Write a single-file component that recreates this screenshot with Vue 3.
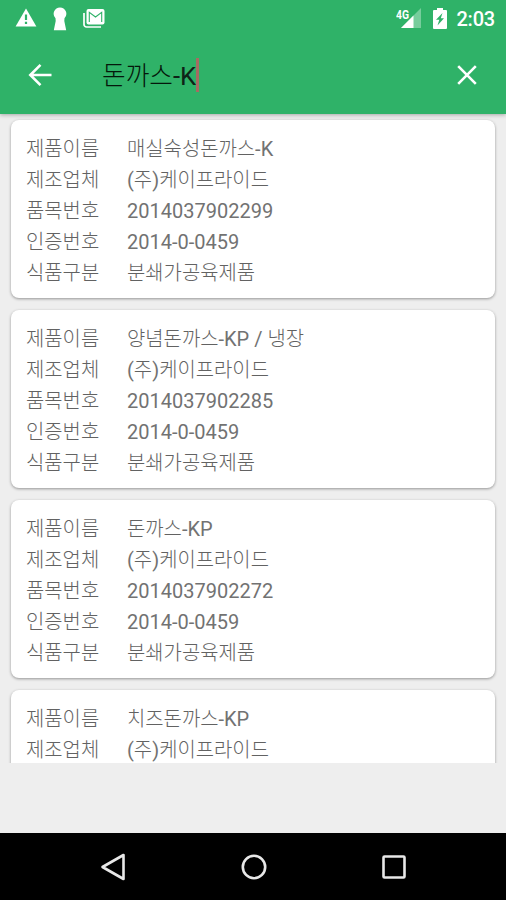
<template>
  <div class="screen">
    <header class="top">
      <div class="status-bar">
        <svg class="warn" width="22" height="20" viewBox="0 0 22 20">
          <path d="M11 0.500 21.400 18.500H.6z" fill="#fff" />
          <path d="M11 6.500v5.500M11 13.700v2.300" stroke="#2fb268" stroke-width="2.200" />
        </svg>
        <svg class="keyhole" width="14" height="24" viewBox="0 0 14 24">
          <path d="M7 .5a6.300 6.300 0 0 1 4.500 10.700L11.300 14l1.900 9.300H.8L2.700 14l-.2-2.800A6.300 6.300 0 0 1 7 .5z" fill="#fff" />
        </svg>
        <svg class="mail" width="22" height="19" viewBox="0 0 22 19">
          <path d="M1 4v11.500a2.500 2.500 0 0 0 2.500 2.500H18" fill="none" stroke="#fff" stroke-width="1.700" />
          <rect x="3.500" y="0" width="18" height="15.500" rx="2" fill="#fff" />
          <path d="M6.300 13V3.300l6.200 4.700 6.200-4.700V13" fill="none" stroke="#2fb268" stroke-width="1.100" />
        </svg>
        <div class="network">
          <span class="net-label">4G</span>
          <svg width="22" height="22" viewBox="0 0 22 22">
            <path d="M21 1v20H1z" fill="#fff" opacity=".35" />
            <path d="M13.500 8.500V21H1z" fill="#fff" />
          </svg>
        </div>
        <svg class="battery" width="14" height="21" viewBox="0 0 14 21">
          <path d="M4 0h6v2h3a1 1 0 0 1 1 1v17a1 1 0 0 1-1 1H1a1 1 0 0 1-1-1V3a1 1 0 0 1 1-1h3z" fill="#fff" />
          <path d="M9.500 5 3 11.800h3.300L4.500 17.500l6.500-7.300H7.800z" fill="#2fb268" />
        </svg>
        <span class="clock">2:03</span>
      </div>
      <div class="search-bar">
        <svg class="back" width="24" height="24" viewBox="0 0 24 24">
          <path d="M23.500 12H2.500M12.500 1.800 2.300 12l10.200 10.200" fill="none" stroke="#fff" stroke-width="2.600" />
        </svg>
        <div class="query">
          <span v-for="(part, i) in splitScript(query)" :key="i" :class="{ hangul: part.hangul }">{{ part.text }}</span>
          <i class="caret"></i>
        </div>
        <svg class="clear" width="20" height="20" viewBox="0 0 20 20">
          <path d="M1.200 1.200l17.600 17.600M18.800 1.200 1.200 18.800" stroke="#fff" stroke-width="2.600" />
        </svg>
      </div>
    </header>

    <main class="list">
      <section v-for="item in products" :key="item.name" class="card">
        <dl v-for="field in filledFields(item)" :key="field.key" class="row">
          <dt class="hangul">{{ field.label }}</dt>
          <dd>
            <span
              v-for="(part, i) in splitScript(item[field.key])"
              :key="i"
              :class="{ hangul: part.hangul }"
            >{{ part.text }}</span>
          </dd>
        </dl>
      </section>
    </main>

    <div class="spacer"></div>

    <nav class="nav-bar">
      <svg width="28" height="28" viewBox="0 0 28 28">
        <path d="M24.500 2v24L3.500 14z" />
      </svg>
      <svg width="28" height="28" viewBox="0 0 28 28">
        <circle cx="14" cy="14" r="11.200" />
      </svg>
      <svg width="28" height="28" viewBox="0 0 28 28">
        <rect x="3.500" y="3.500" width="21" height="21" rx="1" />
      </svg>
    </nav>
  </div>
</template>

<script setup>
import { ref } from 'vue'

const query = ref('돈까스-K')

const fields = [
  { key: 'name', label: '제품이름' },
  { key: 'maker', label: '제조업체' },
  { key: 'code', label: '품목번호' },
  { key: 'cert', label: '인증번호' },
  { key: 'type', label: '식품구분' }
]

const common = {
  maker: '(주)케이프라이드',
  cert: '2014-0-0459',
  type: '분쇄가공육제품'
}

const products = ref([
  { ...common, name: '매실숙성돈까스-K', code: '2014037902299' },
  { ...common, name: '양념돈까스-KP / 냉장', code: '2014037902285' },
  { ...common, name: '돈까스-KP', code: '2014037902272' },
  { name: '치즈돈까스-KP', maker: common.maker }
])

const filledFields = (item) => fields.filter((field) => item[field.key])

// Hangul is set in a lighter weight than Latin letters and digits
const splitScript = (text) =>
  text.match(/[가-힣]+|[^가-힣]+/g).map((part) => ({
    text: part,
    hangul: /[가-힣]/.test(part)
  }))
</script>

<style>
body {
  margin: 0;
}
</style>

<style scoped>
.screen {
  display: flex;
  flex-direction: column;
  width: 506px;
  height: 900px;
  overflow: hidden;
  background: #eeeeee;
  font-family: Roboto, 'Noto Sans CJK KR', sans-serif;
}

.top {
  position: relative;
  z-index: 1;
  flex: none;
  height: 114px;
  background: #2fb268;
  box-shadow: 0 1px 4px rgba(0, 0, 0, 0.3);
}

.status-bar {
  display: flex;
  align-items: center;
  height: 36px;
  padding: 0 11px 0 15px;
}

.keyhole {
  margin: 1px 0 0 16px;
}

.mail {
  margin-left: 16px;
}

.network {
  position: relative;
  height: 22px;
  margin-left: auto;
}

.net-label {
  position: absolute;
  top: 2px;
  left: -4px;
  color: #fff;
  font-size: 12px;
  font-weight: 700;
  line-height: 12px;
  transform: scaleX(0.86);
  transform-origin: left;
}

.battery {
  margin-left: 11px;
}

.clock {
  margin-left: 9px;
  padding-top: 2px;
  color: #fff;
  font-size: 20px;
  font-weight: 500;
  letter-spacing: -0.2px;
}

.search-bar {
  display: flex;
  align-items: center;
  height: 78px;
  padding: 0 29px 0 28px;
}

.query {
  display: flex;
  flex: 1;
  align-items: center;
  margin-left: 50px;
  padding-top: 2px;
  color: #0e2317;
  font-size: 25.7px;
  line-height: 34px;
}

.query .hangul {
  color: #04170b;
  font-weight: 300;
}

.caret {
  width: 3px;
  height: 34px;
  margin-top: -2px;
  background: #a56c62;
}

.list {
  flex: none;
  height: 649px;
  overflow: hidden;
}

.card {
  box-sizing: border-box;
  height: 178px;
  margin: 6px 11px 12px;
  padding: 14px 15px 0;
  border-radius: 8px;
  background: #fff;
  box-shadow: 0 1px 3px rgba(0, 0, 0, 0.38);
}

.row {
  display: flex;
  height: 31px;
  margin: 0;
  color: #727272;
  font-size: 20px;
  line-height: 31px;
  white-space: nowrap;
}

.row .hangul {
  color: #626262;
  font-size: 19.9px;
  font-weight: 300;
}

.row dt {
  width: 101px;
}

.row dd {
  margin: 0;
  white-space: pre;
}

.spacer {
  flex: 1;
}

.nav-bar {
  display: flex;
  flex: none;
  align-items: center;
  justify-content: space-between;
  height: 67px;
  padding: 0 98px 0 99px;
  background: #000;
}

.nav-bar path,
.nav-bar circle,
.nav-bar rect {
  fill: none;
  stroke: #e8e8e8;
  stroke-width: 2.6;
  stroke-linejoin: round;
}
</style>
